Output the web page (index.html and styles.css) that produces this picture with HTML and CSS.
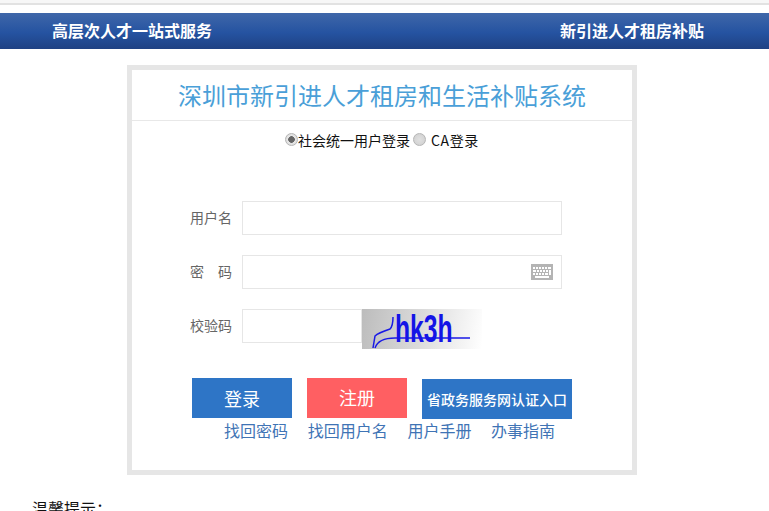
FILE: index.html
```html
<!DOCTYPE html>
<html lang="zh-CN">
<head>
<meta charset="utf-8">
<title>深圳市新引进人才租房和生活补贴系统</title>
<link rel="stylesheet" href="styles.css">
</head>
<body>
<div class="topline"></div>
<header class="banner">
  <span>高层次人才一站式服务</span>
  <span>新引进人才租房补贴</span>
</header>
<main class="card">
  <h1 class="title">深圳市新引进人才租房和生活补贴系统</h1>
  <div class="modes">
    <input class="radio" type="radio" name="mode" checked><span class="mode-a">社会统一用户登录</span><input class="radio radio-b" type="radio" name="mode"><span class="mode-b">CA登录</span>
  </div>
  <form class="form">
    <div class="row">
      <label class="label">用户名</label>
      <input class="field" type="text">
    </div>
    <div class="row">
      <label class="label label-spread"><span>密</span><span>码</span></label>
      <div class="field pw">
        <svg class="kbd" width="22" height="16" viewBox="0 0 22 16">
          <rect width="22" height="16" fill="#b4b4b4"/>
          <path d="M2 3h2v2H2zM5 3h2v2H5zM8 3h2v2H8zM11 3h2v2h-2zM14 3h2v2h-2zM17 3h3v2h-3zM2 6h3v2H2zM6 6h2v2H6zM9 6h2v2H9zM12 6h2v2h-2zM15 6h2v2h-2zM18 6h2v5h-2zM2 9h2v2H2zM5 9h2v2H5zM8 9h2v2H8zM11 9h2v2h-2zM14 9h3v2h-3zM4 12h14v2H4z" fill="#fff"/>
        </svg>
      </div>
    </div>
    <div class="row">
      <label class="label">校验码</label>
      <input class="field code" type="text">
      <div class="captcha">
        <svg class="captcha-lines" width="120" height="40" viewBox="0 0 120 40">
          <path d="M11 39l2-12c3-3 9-5 15-7 2-2 3-6 3-12M13 39c2-6 7-10 20-10h75" fill="none" stroke="#1a1ae6" stroke-width="1.5"/>
        </svg>
        <span class="captcha-text">hk3h</span>
      </div>
    </div>
    <div class="buttons">
      <button class="btn btn-login" type="button">登录</button>
      <button class="btn btn-reg" type="button">注册</button>
      <button class="btn btn-gov" type="button">省政务服务网认证入口</button>
    </div>
    <nav class="links">
      <a href="#">找回密码</a>
      <a href="#">找回用户名</a>
      <a href="#">用户手册</a>
      <a href="#">办事指南</a>
    </nav>
  </form>
</main>
<p class="tip">温馨提示：</p>
</body>
</html>
```
FILE: styles.css
```css
html, body {
  margin: 0;
  padding: 0;
  height: 511px;
  overflow: hidden;
  background: #fff;
  font-family: "Noto Sans CJK SC", "Liberation Sans", sans-serif;
}
.topline {
  height: 5px;
  box-sizing: border-box;
  border-bottom: 2px solid #e2e2e2;
  background: #f7f7f7;
}
.banner {
  margin-top: 8px;
  height: 36px;
  box-sizing: border-box;
  padding: 0 65px 2px 52px;
  display: flex;
  justify-content: space-between;
  align-items: center;
  color: #fff;
  font-size: 16px;
  font-weight: 700;
  background: linear-gradient(#3f67a9 0%, #2553a1 55%, #1f4183 100%);
}
.card {
  width: 510px;
  height: 410px;
  box-sizing: border-box;
  margin: 16px 0 0 127px;
  border: 5px solid #e6e6e6;
}
.title {
  margin: 0;
  height: 51px;
  box-sizing: border-box;
  border-bottom: 1px solid #e8e8e8;
  text-align: center;
  font-size: 24px;
  font-weight: 400;
  line-height: 50px;
  color: #4a9fd8;
}
.modes {
  display: flex;
  align-items: center;
  height: 20px;
  margin-top: 9px;
  padding-left: 153px;
  font-size: 14px;
  color: #111;
}
.radio {
  appearance: none;
  width: 13px;
  height: 13px;
  margin: 0 0 1px;
  border-radius: 50%;
  border: 1px solid #b5b5b5;
  box-sizing: border-box;
  background: radial-gradient(circle, #e0e0e0 0, #cfcfcf 100%);
}
.radio:checked {
  background: radial-gradient(circle, #666 0, #666 3px, #e6e6e6 3.6px, #d8d8d8 100%);
}
.radio-b {
  margin-left: 3px;
}
.mode-b {
  margin-left: 5px;
  letter-spacing: 0.6px;
}
.form {
  padding-top: 51px;
}
.row {
  display: flex;
  height: 34px;
  margin-bottom: 20px;
}
.label {
  width: 110px;
  box-sizing: border-box;
  padding-right: 10px;
  text-align: right;
  font-size: 14px;
  line-height: 32px;
  color: #666;
}
.label-spread {
  display: flex;
  justify-content: flex-end;
  gap: 14px;
}
.field {
  width: 320px;
  height: 34px;
  box-sizing: border-box;
  margin: 0;
  padding: 0;
  border: 1px solid #e6e6e6;
  background: #fff;
}
.pw {
  display: flex;
  align-items: center;
  justify-content: flex-end;
  padding-right: 8px;
}
.kbd {
  display: block;
}
.code {
  width: 120px;
}
.captcha {
  position: relative;
  width: 120px;
  height: 40px;
  overflow: hidden;
  background: linear-gradient(100deg, #bcbcbc 0%, #dcdcdc 50%, #fff 100%);
}
.captcha-lines {
  position: absolute;
  left: 0;
  top: 0;
}
.captcha-text {
  position: absolute;
  left: 33px;
  top: 1px;
  font-family: "Liberation Sans", sans-serif;
  font-size: 38px;
  font-weight: 700;
  line-height: 39px;
  color: #1414e6;
  transform: scaleX(0.65);
  transform-origin: left center;
}
.buttons {
  display: flex;
  align-items: flex-start;
  gap: 15px;
  margin-top: 15px;
  padding: 15px 0 0 60px;
}
.btn {
  width: 100px;
  height: 40px;
  padding: 0;
  border: 0;
  color: #fff;
  font-family: inherit;
  font-size: 18px;
}
.btn-login {
  background: #2e75c6;
}
.btn-reg {
  padding-bottom: 2px;
  background: #ff5f62;
}
.btn-gov {
  width: 150px;
  margin-top: 1px;
  font-size: 14px;
  font-weight: 500;
  background: #2e75c6;
}
.links {
  display: flex;
  gap: 19.7px;
  padding-left: 92px;
  font-size: 16px;
  line-height: 24px;
  margin-top: -1px;
}
.links a {
  color: #3f74b5;
  text-decoration: none;
}
.tip {
  margin: 21px 0 0 32px;
  font-size: 16px;
  line-height: 24px;
  color: #111;
}
```
